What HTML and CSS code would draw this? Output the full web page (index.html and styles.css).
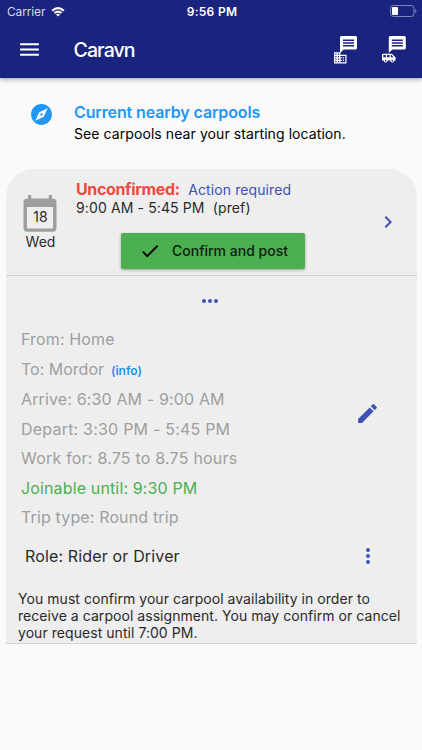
FILE: index.html
```html
<!DOCTYPE html>
<html lang="en">
<head>
<meta charset="utf-8">
<title>Caravn</title>
<link rel="stylesheet" href="styles.css">
</head>
<body>
<header class="top">
  <div class="status">
    <div class="carrier"><span class="carrier-name">Carrier</span>
      <svg class="wifi" viewBox="0 0 14 11"><path d="M.4 4Q7-2.200 13.600 4L12.100 5.500Q7 .8 1.900 5.500Z"/><path d="M2.700 6.300Q7 2.500 11.300 6.300L9.800 7.800Q7 5.500 4.200 7.800Z"/><path d="M4.900 8.500Q7 6.900 9.100 8.500L7 10.600Z"/></svg>
    </div>
    <div class="clock">9:56 PM</div>
    <svg class="battery" viewBox="0 0 27 12"><rect class="battery-case" x=".5" y=".5" width="23.500" height="11" rx="2.800"/><rect x="2" y="2" width="6" height="8" rx="1"/><path class="battery-tip" d="M25.200 4Q27.800 6 25.200 8Z"/></svg>
  </div>
  <nav class="bar">
    <svg class="menu" viewBox="0 0 24 24"><path d="M3 18h18v-2H3v2zm0-5h18v-2H3v2zm0-7v2h18V6H3z"/></svg>
    <h1 class="brand">Caravn</h1>
    <svg class="chat" viewBox="0 0 24 28"><path fill-rule="evenodd" d="M7.500 0H21.500Q23 0 23 1.500V12Q23 13.500 21.500 13.500H9.500L6 17V1.500Q6 0 7.500 0ZM9 3.500V5H20V3.500ZM9 6.300V7.700H20V6.300ZM9 9V10.400H20V9Z"/><path fill-rule="evenodd" d="M0 16.300H6.400V18.700H12.500V27.500H0ZM1.200 17.600v1.200h1.300v-1.200zM3.800 17.600v1.200h1.300v-1.200zM1.200 20v1.200h1.300V20zM3.800 20v1.200h1.300V20zM1.200 22.500v1.200h1.300v-1.200zM3.800 22.500v1.200h1.300v-1.200zM1.200 25v1.200h1.300V25zM3.800 25v1.200h1.300V25zM6.400 20v1.200h1.200v1.200H6.400v1.300h1.200v1.200H6.400v1.300h4.900V20zM8.700 21.200H10v1.200H8.700zM8.700 23.700H10v1.200H8.700z"/></svg>
    <svg class="chat" viewBox="0 0 24 28"><path fill-rule="evenodd" d="M8.300 0H22.300Q23.800 0 23.800 1.500V12Q23.800 13.500 22.300 13.500H10.300L6.800 17V1.500Q6.800 0 8.300 0ZM9.800 3.500V5H20.800V3.500ZM9.800 6.300V7.700H20.800V6.300ZM9.800 9V10.400H20.800V9Z"/><path fill-rule="evenodd" d="M1.300 17.700H10L13.600 21.600V24.600H12.300A2 2 0 0 1 8.300 24.600H5.600A2 2 0 0 1 1.600 24.600H0V19Q0 17.700 1.300 17.700ZM1.300 19v2.300h2.500V19zM5 19v2.300h2.500V19zM8.800 19v2.300h2.700L9.600 19zM3.600 23.900a.8.8 0 1 0 .01 0zM10.300 23.900a.8.8 0 1 0 .01 0z"/></svg>
  </nav>
</header>
<main>
  <section class="nearby">
    <svg class="compass" viewBox="0 0 24 24"><path d="M12 10.900c-.61 0-1.100.49-1.100 1.100s.49 1.100 1.100 1.100c.61 0 1.100-.49 1.100-1.100s-.49-1.100-1.100-1.100zM12 2C6.480 2 2 6.480 2 12s4.480 10 10 10 10-4.480 10-10S17.520 2 12 2zm2.190 12.190L6 18l3.810-8.190L18 6l-3.810 8.190z"/></svg>
    <div>
      <h2 class="nearby-title">Current nearby carpools</h2>
      <p class="nearby-text">See carpools near your starting location.</p>
    </div>
  </section>
  <article class="card">
    <div class="trip">
      <div class="date">
        <div class="calendar"><svg viewBox="0 0 34 37"><path fill-rule="evenodd" d="M5 0H8.300V3.500H25.700V0H29V3.500H30Q33.500 3.500 33.500 7V33Q33.500 36.700 30 36.700H4Q.5 36.700 .5 33V7Q.5 3.500 4 3.500H5ZM4 12V33.400H30V12Z"/></svg><span class="day">18</span></div>
        <div class="weekday">Wed</div>
      </div>
      <div class="trip-info">
        <div class="state"><strong class="unconfirmed">Unconfirmed:</strong><span class="action">Action required</span></div>
        <div class="hours">9:00 AM - 5:45 PM&nbsp; (pref)</div>
        <button class="confirm"><svg viewBox="0 0 24 24"><path d="M9 16.170L4.830 12l-1.420 1.410L9 19 21 7l-1.410-1.410z"/></svg><span>Confirm and post</span></button>
      </div>
      <svg class="chevron" viewBox="0 0 24 24"><path d="M10 6L8.590 7.410 13.170 12l-4.580 4.590L10 18l6-6z"/></svg>
    </div>
    <svg class="dots" viewBox="0 0 18 6"><circle cx="3" cy="3" r="2"/><circle cx="9" cy="3" r="2"/><circle cx="15" cy="3" r="2"/></svg>
    <div class="details">
      <ul class="rows">
        <li>From: Home</li>
        <li class="destination">To: Mordor<a class="info">(info)</a></li>
        <li>Arrive: 6:30 AM - 9:00 AM</li>
        <li class="wide">Depart: 3:30 PM - 5:45 PM</li>
        <li class="wide">Work for: 8.75 to 8.75 hours</li>
        <li class="joinable">Joinable until: 9:30 PM</li>
        <li>Trip type: Round trip</li>
      </ul>
      <svg class="edit" viewBox="0 0 24 24"><path d="M3 17.250V21h3.750L17.810 9.940l-3.750-3.750L3 17.250zM20.710 7.040c.39-.39.39-1.020 0-1.410l-2.340-2.340c-.39-.39-1.020-.39-1.410 0l-1.830 1.830 3.750 3.750 1.830-1.830z"/></svg>
    </div>
    <div class="role"><span>Role: Rider or Driver</span><svg class="more" viewBox="0 0 6 18"><circle cx="3" cy="3" r="2"/><circle cx="3" cy="9" r="2"/><circle cx="3" cy="15" r="2"/></svg></div>
    <p class="note">You must confirm your carpool availability in order to<br>receive a carpool assignment. You may confirm or cancel<br>your request until 7:00 PM.</p>
  </article>
</main>
</body>
</html>
```
FILE: styles.css
```css
* { box-sizing: border-box; margin: 0; padding: 0; }
body { background: #fafafa; color: #2a2a2a; font-family: Inter, sans-serif; white-space: nowrap; overflow: hidden; }
svg { display: block; flex: none; }

.top { height: 77.500px; background: #1a237e; color: #fff; fill: #fff; box-shadow: 0 1px 5px rgba(0, 0, 0, .4); }
.status { height: 22px; display: grid; grid-template-columns: 1fr auto 1fr; align-items: center; padding: 0 5px 0 7px; }
.carrier { display: flex; align-items: center; gap: 6px; font-size: 12px; color: #d8daec; }
.carrier-name { letter-spacing: -.15px; }
.wifi { width: 14px; height: 11px; }
.clock { font-size: 12px; font-weight: 600; letter-spacing: .3px; }
.battery { width: 27px; height: 12px; justify-self: end; }
.battery-case { fill: none; stroke: #8085b8; }
.battery-tip { fill: #8085b8; }
.bar { height: 55px; display: flex; align-items: center; padding: 0 16px 0 16.500px; }
.menu { width: 25px; height: 25px; }
.brand { flex: 1; margin-left: 32px; font-size: 19.500px; font-weight: 500; letter-spacing: -.9px; }
.chat { width: 24px; height: 28px; }
.chat + .chat { margin-left: 24px; }

.nearby { display: flex; height: 91.500px; padding-top: 23.500px; }
.compass { width: 25px; height: 25px; margin: 1px 20.500px 0 28.500px; fill: #2196f3; }
.nearby-title { font-size: 16px; line-height: 23px; font-weight: 600; color: #2196f3; letter-spacing: -.12px; }
.nearby-text { font-size: 14px; line-height: 19px; color: #000; letter-spacing: .08px; }

.card { width: 411px; height: 475px; margin-left: 6px; background: #eee; border-bottom: 1.5px solid #d4d4d4; border-radius: 28px 28px 0 0; }
.trip { height: 107px; border-bottom: 1.5px solid #d0d0d0; display: flex; }
.date { width: 34px; margin: 26px 0 0 17.500px; text-align: center; }
.calendar { position: relative; height: 37px; fill: #9e9e9e; }
.calendar svg { width: 34px; margin-left: -.5px; }
.day { position: absolute; inset: 13px 0 0; font-size: 14px; line-height: 18px; }
.weekday { font-size: 14px; line-height: 20px; }
.trip-info { flex: 1; padding: 11px 0 0 18.500px; }
.state { display: flex; align-items: baseline; gap: 8.500px; line-height: 18px; }
.unconfirmed { font-size: 16px; font-weight: 700; color: #ec4a3f; letter-spacing: -.35px; }
.action { font-size: 14px; color: #3f51b5; letter-spacing: .1px; }
.hours { font-size: 14px; line-height: 17px; letter-spacing: .12px; }
.confirm { display: flex; align-items: center; gap: 11px; width: 184px; height: 36px; margin: 17px 0 0 45px; padding: 0 0 1px 18px; border: 0; border-radius: 2px; background: #4caf50; color: #0c1d0d; font: 500 14px Inter, sans-serif; box-shadow: 0 1px 3px rgba(0, 0, 0, .35); }
.confirm svg { width: 22px; height: 22px; }
.chevron { width: 24px; height: 24px; margin: 41px 17px 0 0; fill: #3f51b5; }
.dots { width: 18px; height: 6px; margin: 21.500px 0 0 195px; fill: #3f51b5; }
.details { display: flex; align-items: flex-start; justify-content: space-between; margin-top: 21.500px; padding: 0 37px 0 15px; }
.rows { list-style: none; font-size: 16px; line-height: 29.500px; color: #9e9e9e; letter-spacing: .14px; }
.destination { letter-spacing: 0; }
.wide { letter-spacing: .21px; }
.info { margin-left: 7px; font-size: 12px; font-weight: 600; color: #2196f3; }
.joinable { color: #4caf50; }
.edit { width: 25px; height: 25px; margin-top: 76px; }
.edit, .more { fill: #3f51b5; }
.role { display: flex; align-items: center; justify-content: space-between; height: 47px; padding: 0 46.500px 0 19px; font-size: 16px; letter-spacing: .15px; }
.more { width: 6px; height: 18px; }
.note { margin: 10px 0 0 12px; font-size: 14px; line-height: 17.400px; letter-spacing: .05px; }
```
